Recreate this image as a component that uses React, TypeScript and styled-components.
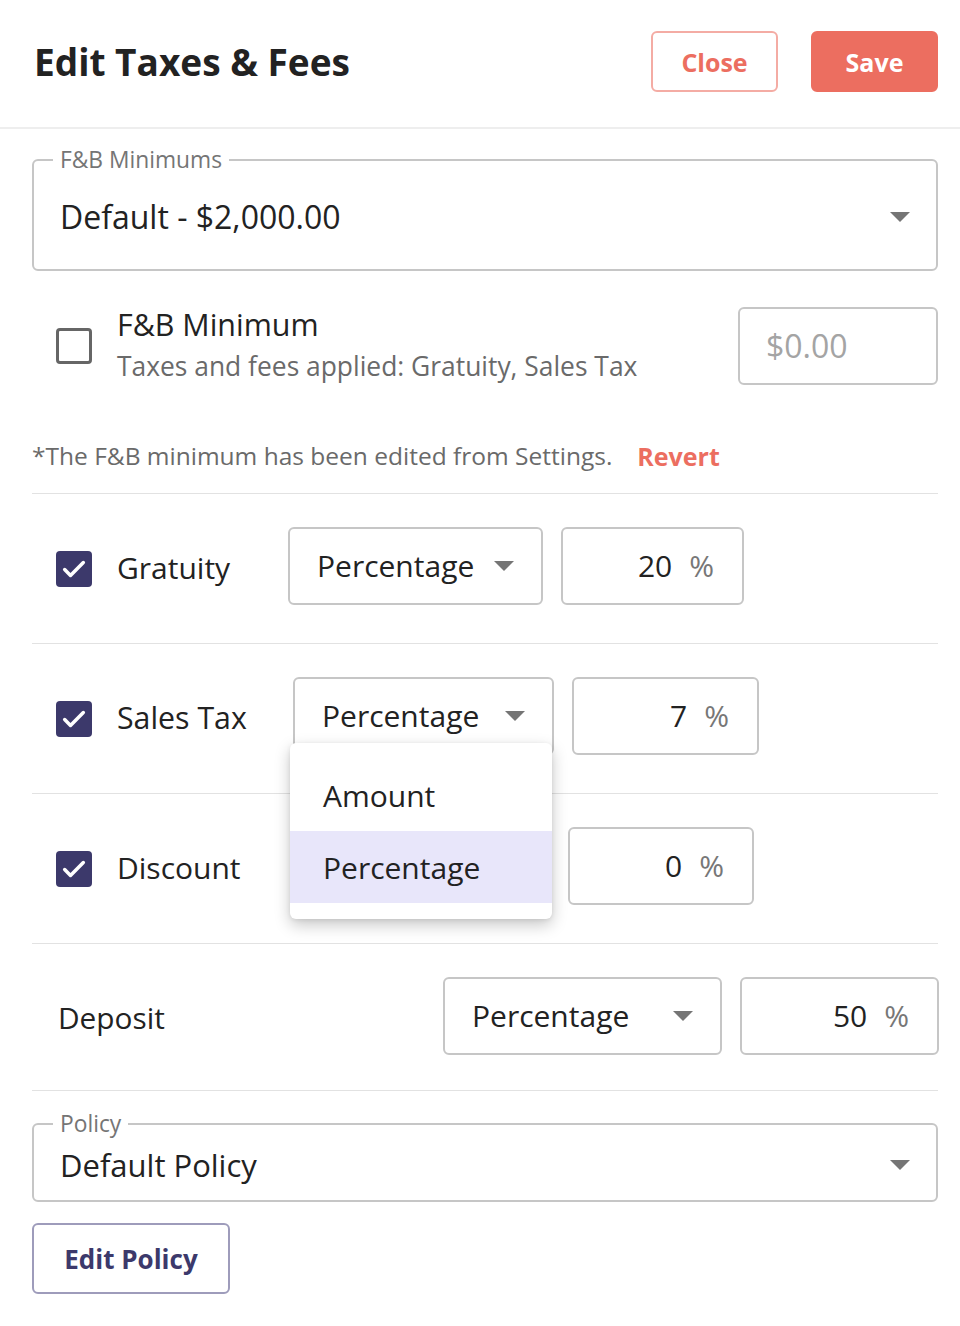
import React from "react";
import styled, { createGlobalStyle } from "styled-components";

const Global = createGlobalStyle`
  html, body { margin: 0; padding: 0; background: #fff; }
  body { font-family: "Open Sans", "Noto Sans", Arial, sans-serif; color: #222; -webkit-font-smoothing: antialiased; }
  * { box-sizing: border-box; }
`;

const Page = styled.div`
  width: 960px;
  min-height: 1326px;
  background: #fff;
`;

const Header = styled.header`
  height: 129px;
  display: flex;
  align-items: center;
  justify-content: space-between;
  padding: 0 22px 4px 34px;
  border-bottom: 2px solid #eeeeee;
`;

const Title = styled.h1`
  margin: 0;
  font-size: 37px;
  line-height: 44px;
  font-weight: 700;
  color: #222;
`;

const HeaderActions = styled.div`
  display: flex;
  gap: 33px;
`;

const HeaderButton = styled.button<{ $solid?: boolean }>`
  width: 127px;
  height: 61px;
  border-radius: 6px;
  font-family: inherit;
  font-size: 25px;
  font-weight: 700;
  cursor: pointer;
  border: 2px solid ${(p) => (p.$solid ? "#ec6e60" : "#f4aca4")};
  background: ${(p) => (p.$solid ? "#ec6e60" : "#fff")};
  color: ${(p) => (p.$solid ? "#fff" : "#ec6e60")};
`;

const Body = styled.div`
  padding: 20px 22px 40px 32px;
`;

const Fieldset = styled.fieldset<{ $mt?: number }>`
  margin: ${(p) => p.$mt || 0}px 0 0;
  padding: 0 26px;
  border: 2px solid #c6c6c6;
  border-radius: 6px;
  min-width: 0;
`;

const Legend = styled.legend`
  font-size: 22.8px;
  line-height: 21px;
  color: #757575;
  padding: 0 7px;
  margin-left: -7px;
`;

const FieldValue = styled.div<{ $h: number; $pb: number; $size: number }>`
  height: ${(p) => p.$h}px;
  padding-bottom: ${(p) => p.$pb}px;
  display: flex;
  align-items: center;
  justify-content: space-between;
  font-size: ${(p) => p.$size}px;
  line-height: 36px;
  color: #222;
`;

const Caret = styled.span`
  width: 0;
  height: 0;
  border-left: 10px solid transparent;
  border-right: 10px solid transparent;
  border-top: 10px solid #757575;
  flex-shrink: 0;
`;

const MinimumRow = styled.div`
  display: flex;
  align-items: center;
  margin-top: 36px;
  padding-left: 24px;
`;

const Check = styled.span<{ $checked?: boolean }>`
  width: 36px;
  height: 36px;
  flex-shrink: 0;
  border-radius: 4px;
  margin-top: ${(p) => (p.$checked ? 5 : 0)}px;
  border: ${(p) => (p.$checked ? "none" : "3px solid #666")};
  background: ${(p) => (p.$checked ? "#3c396b" : "#fff")};
  display: flex;
  align-items: center;
  justify-content: center;
`;

const MinimumText = styled.div`
  flex: 1;
  margin-left: 25px;
  display: flex;
  flex-direction: column;
  gap: 6px;
  margin-top: -2px;
`;

const MinTitle = styled.div`
  font-size: 30.4px;
  line-height: 36px;
  color: #222;
`;

const MinSub = styled.div`
  font-size: 26.4px;
  line-height: 34px;
  color: #6a6a6a;
`;

const Box = styled.div<{ $w: number }>`
  width: ${(p) => p.$w}px;
  height: 78px;
  flex-shrink: 0;
  border: 2px solid #c6c6c6;
  border-radius: 6px;
  display: flex;
  align-items: center;
  font-size: 30px;
  line-height: 36px;
  background: #fff;
`;

const AmountBox = styled(Box)`
  padding-left: 26px;
  font-size: 32px;
  color: #a4a4a4;
`;

const Note = styled.div`
  margin: 56px 0 22px;
  font-size: 24.5px;
  line-height: 30px;
  color: #6a6a6a;
  display: flex;
  gap: 25px;
`;

const RevertLink = styled.span`
  color: #ec6e60;
  font-weight: 700;
  font-size: 25px;
`;

const Divider = styled.hr`
  margin: 0;
  border: none;
  border-top: 1px solid #e2e2e2;
`;

const FeeRow = styled.div<{ $pl: number; $pb: number }>`
  display: flex;
  align-items: center;
  padding: 33px 0 ${(p) => p.$pb}px ${(p) => p.$pl}px;
`;

const FeeLabel = styled.div<{ $w: number; $gap: number; $size: number }>`
  width: ${(p) => p.$w}px;
  margin-left: ${(p) => p.$gap}px;
  flex-shrink: 0;
  font-size: ${(p) => p.$size}px;
  line-height: 40px;
  color: #222;
  padding-top: 3px;
`;

const SelectWrap = styled.div`
  position: relative;
  margin-right: 18px;
`;

const Select = styled(Box)`
  justify-content: space-between;
  padding: 0 27px 0 27px;
  color: #222;
`;

const ValueBox = styled(Box)`
  justify-content: flex-end;
  padding-right: 28px;
  gap: 17px;
`;

const Num = styled.span`
  color: #222;
`;

const Pct = styled.span`
  color: #777;
`;

const Menu = styled.ul`
  position: absolute;
  top: 66px;
  left: -3px;
  width: 262px;
  margin: 0;
  padding: 16px 0;
  list-style: none;
  background: #fff;
  border-radius: 6px;
  box-shadow: 0 6px 16px rgba(0, 0, 0, 0.22), 0 1px 4px rgba(0, 0, 0, 0.08);
  z-index: 5;
`;

const MenuItem = styled.li<{ $active?: boolean }>`
  height: 72px;
  display: flex;
  align-items: center;
  padding-left: 33px;
  font-size: 30px;
  color: #222;
  background: ${(p) => (p.$active ? "#e8e6fa" : "transparent")};
`;

const PolicyButton = styled.button`
  display: block;
  margin-top: 21px;
  width: 198px;
  height: 71px;
  border: 2px solid #9e9cbb;
  border-radius: 6px;
  background: #fff;
  color: #3c396b;
  font-family: inherit;
  font-size: 26px;
  font-weight: 700;
  cursor: pointer;
`;

const CheckMark = () => (
  <svg width="28" height="28" viewBox="0 0 24 24" fill="none">
    <path d="M4 12.5l5 5L20 6.5" stroke="#fff" strokeWidth="3" strokeLinecap="round" strokeLinejoin="round" />
  </svg>
);

type Fee = {
  label: string;
  size: number;
  labelW: number;
  selW: number;
  valW: number;
  value: string;
  open?: boolean;
  hideSelect?: boolean;
};

const fees: Fee[] = [
  { label: "Gratuity", size: 30, labelW: 171, selW: 255, valW: 183, value: "20" },
  { label: "Sales Tax", size: 30.3, labelW: 176, selW: 261, valW: 187, value: "7", open: true },
  { label: "Discount", size: 30, labelW: 173, selW: 260, valW: 186, value: "0", hideSelect: true },
];

export default function App() {
  return (
    <Page>
      <Global />
      <Header>
        <Title>Edit Taxes &amp; Fees</Title>
        <HeaderActions>
          <HeaderButton>Close</HeaderButton>
          <HeaderButton $solid>Save</HeaderButton>
        </HeaderActions>
      </Header>
      <Body>
        <Fieldset>
          <Legend>F&amp;B Minimums</Legend>
          <FieldValue $h={99} $pb={5} $size={32}>
            <span>Default - $2,000.00</span>
            <Caret />
          </FieldValue>
        </Fieldset>

        <MinimumRow>
          <Check />
          <MinimumText>
            <MinTitle>F&amp;B Minimum</MinTitle>
            <MinSub>Taxes and fees applied: Gratuity, Sales Tax</MinSub>
          </MinimumText>
          <AmountBox $w={200}>$0.00</AmountBox>
        </MinimumRow>

        <Note>
          <span>*The F&amp;B minimum has been edited from Settings.</span>
          <RevertLink>Revert</RevertLink>
        </Note>
        <Divider />

        {fees.map((f) => (
          <React.Fragment key={f.label}>
            <FeeRow $pl={24} $pb={38}>
              <Check $checked>
                <CheckMark />
              </Check>
              <FeeLabel $w={f.labelW} $gap={25} $size={f.size}>{f.label}</FeeLabel>
              <SelectWrap>
                {f.hideSelect ? (
                  <Box $w={f.selW} />
                ) : (
                  <Select $w={f.selW}>
                    <span>Percentage</span>
                    <Caret />
                  </Select>
                )}
                {f.open && (
                  <Menu>
                    <MenuItem>Amount</MenuItem>
                    <MenuItem $active>Percentage</MenuItem>
                  </Menu>
                )}
              </SelectWrap>
              <ValueBox $w={f.valW}>
                <Num>{f.value}</Num>
                <Pct>%</Pct>
              </ValueBox>
            </FeeRow>
            <Divider />
          </React.Fragment>
        ))}

        <FeeRow $pl={26} $pb={35}>
          <FeeLabel $w={385} $gap={0} $size={29.8}>Deposit</FeeLabel>
          <SelectWrap>
            <Select $w={279}>
              <span>Percentage</span>
              <Caret />
            </Select>
          </SelectWrap>
          <ValueBox $w={199}>
            <Num>50</Num>
            <Pct>%</Pct>
          </ValueBox>
        </FeeRow>
        <Divider />

        <Fieldset $mt={22}>
          <Legend>Policy</Legend>
          <FieldValue $h={66} $pb={4} $size={31}>
            <span>Default Policy</span>
            <Caret />
          </FieldValue>
        </Fieldset>
        <PolicyButton>Edit Policy</PolicyButton>
      </Body>
    </Page>
  );
}
